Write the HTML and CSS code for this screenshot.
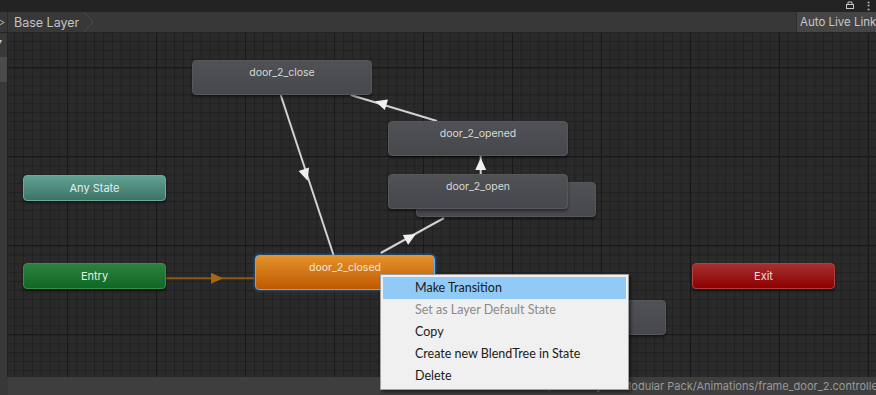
FILE: index.html
```html
<!DOCTYPE html>
<html>
    <head>
        <title>Animator</title>
        <link rel="stylesheet" href="styles.css">
    </head>
    <body>
        <div class="window">
            <div class="titlebar">
                <svg class="title-icon" width="10" height="10" viewBox="0 0 10 10">
                    <path d="M3 4 V2 H7 V4" fill="none" stroke="#c8c8c8" stroke-width="1"/>
                    <rect x="1.5" y="4.5" width="7" height="4" fill="none" stroke="#c8c8c8" stroke-width="1"/>
                </svg>
                <span class="kebab">&#8942;</span>
            </div>
            <div class="toolbar">
                <div class="toolbar-stub">&#9655;</div>
                <div class="crumb">
                    <span>Base Layer</span>
                    <svg class="crumb-arrow" width="12" height="20" viewBox="0 0 12 20">
                        <path d="M1 0 L10 10 L1 20" fill="none" stroke="#4c4c4c" stroke-width="1"/>
                    </svg>
                </div>
                <div class="toolbar-space"></div>
                <div class="live-link">Auto Live Link</div>
            </div>
            <div class="main">
                <aside class="side">
                    <div class="side-drop">&#9662;</div>
                    <div class="side-block"></div>
                </aside>
                <div class="graph">
                    <svg class="edges" width="868" height="344" viewBox="0 0 868 344">
                        <g stroke="#d2d2d2" stroke-width="2" fill="#ececec">
                            <line x1="273.7" y1="62" x2="326.5" y2="222"/>
                            <line x1="430" y1="88" x2="343.7" y2="62"/>
                            <line x1="473.7" y1="141" x2="473.7" y2="123"/>
                            <line x1="373.7" y1="220" x2="437" y2="185"/>
                        </g>
                        <g fill="#f0f0f0">
                            <polygon points="-6,-5.5 6,0 -6,5.5" transform="translate(298.7 142) rotate(71.7)"/>
                            <polygon points="-6,-5.5 6,0 -6,5.5" transform="translate(373.7 70) rotate(196.8)"/>
                            <polygon points="-6,-5.5 6,0 -6,5.5" transform="translate(473.7 131) rotate(-90)"/>
                            <polygon points="-6,-5.5 6,0 -6,5.5" transform="translate(403.7 204) rotate(-28.9)"/>
                        </g>
                        <line x1="158" y1="245.3" x2="247" y2="245.3" stroke="#8a5a12" stroke-width="2"/>
                        <polygon points="-6,-5.5 6,0 -6,5.5" transform="translate(210 245.3)" fill="#a8690e"/>
                    </svg>

                    <div class="node state" style="left:184px;top:27px">door_2_close</div>
                    <div class="node state" style="left:380px;top:88px">door_2_opened</div>
                    <div class="node state" style="left:408px;top:149px"></div>
                    <div class="node state" style="left:380px;top:141px">door_2_open</div>
                    <div class="node state" style="left:478px;top:267px"></div>
                    <div class="node state active" style="left:247px;top:222px">door_2_closed</div>
                    <div class="node small any" style="left:15px;top:142px">Any State</div>
                    <div class="node small entry" style="left:15px;top:230px">Entry</div>
                    <div class="node small exit" style="left:684px;top:230px">Exit</div>
                </div>
            </div>
            <div class="status">
                <span class="path">od:Assets/Sci-Fi Styled Modular Pack/Animations/frame_door_2.controller</span>
            </div>

            <ul class="context-menu">
                <li class="selected">Make Transition</li>
                <li class="disabled">Set as Layer Default State</li>
                <li>Copy</li>
                <li>Create new BlendTree in State</li>
                <li>Delete</li>
            </ul>
        </div>
    </body>
</html>
```

FILE: styles.css
```css
*, *::before, *::after {
    box-sizing: border-box;
}

body {
    margin: 0px;
    background-color: #282828;
    font-family: Inter, "Noto Sans", sans-serif;
}

.window {
    position: relative;
    display: flex;
    flex-direction: column;
    width: 876px;
    height: 395px;
    overflow: hidden;
}

.titlebar {
    display: flex;
    align-items: center;
    justify-content: flex-end;
    gap: 8px;
    height: 12px;
    padding-right: 2px;
    background-color: #232323;
    color: #c8c8c8;
}

.title-icon {
    margin-top: -2px;
}

.kebab {
    font-size: 11px;
    line-height: 12px;
    font-weight: bold;
}

.toolbar {
    display: flex;
    height: 21px;
    background-color: #383838;
    border-bottom: 1px solid #232323;
}

.toolbar-stub {
    width: 8px;
    overflow: hidden;
    color: #b0b0b0;
    font-size: 10px;
    line-height: 20px;
    text-indent: -4px;
    border-right: 1px solid #2a2a2a;
}

.crumb {
    display: flex;
    align-items: center;
    padding-left: 6px;
    color: #c4c4c4;
    font-size: 12.5px;
}

.crumb-arrow {
    margin-left: 4px;
}

.toolbar-space {
    flex: 1;
}

.live-link {
    width: 80px;
    padding-left: 3px;
    background-color: #454545;
    border-left: 1px solid #2c2c2c;
    color: #c8c8c8;
    font-size: 11.5px;
    line-height: 20px;
    white-space: nowrap;
    overflow: hidden;
}

.main {
    display: flex;
    flex: 1;
}

.side {
    width: 8px;
    background-color: #383838;
    border-right: 1px solid #232323;
}

.side-drop {
    color: #c0c0c0;
    font-size: 8px;
    line-height: 16px;
    text-indent: -2px;
}

.side-block {
    height: 25px;
    margin-top: 8px;
    background-color: #4b4b4b;
}

.graph {
    position: relative;
    flex: 1;
    background-color: #2a2a2a;
    background-image:
        linear-gradient(to right, #191919 1px, transparent 1px),
        linear-gradient(to bottom, #191919 1px, transparent 1px),
        linear-gradient(to right, #202020 1px, transparent 1px),
        linear-gradient(to bottom, #202020 1px, transparent 1px);
    background-size: 89px 89px, 89px 89px, 8.9px 8.9px, 8.9px 8.9px;
    background-position: 59px 34px, 59px 34px, 6px 8px, 6px 8px;
}

.edges {
    position: absolute;
    top: 0px;
    left: -1px;
}

.node {
    position: absolute;
    width: 180px;
    height: 35px;
    padding-top: 5px;
    border-radius: 4px;
    text-align: center;
    font-size: 10.5px;
    color: #d8d8d8;
    box-shadow: 0px 2px 3px rgba(0, 0, 0, 0.45);
}

.state {
    background: linear-gradient(#505155, #47484c);
    border: 1px solid #56575b;
}

.active {
    background: linear-gradient(#e3922c, #bf5900);
    border: 1px solid #5aaeff;
    box-shadow: 0px 0px 3px #2f86df;
    color: #f4e6d4;
}

.small {
    width: 143px;
    height: 26px;
    padding-top: 5px;
    font-size: 11px;
}

.any {
    background: linear-gradient(#5fa393, #3e7268);
    border: 1px solid #6aab9c;
    color: #e4efec;
}

.entry {
    background: linear-gradient(#2e8140, #0f6824);
    border: 1px solid #3a8c4a;
    color: #e3f0e5;
}

.exit {
    background: linear-gradient(#a53030, #8e0000);
    border: 1px solid #b04040;
    color: #f2dede;
}

.status {
    display: flex;
    justify-content: flex-end;
    height: 18px;
    padding-left: 530px;
    background-color: #3e3e3e;
    border-left: 8px solid #383838;
    overflow: hidden;
}

.path {
    flex-shrink: 0;
    margin-right: -6px;
    color: #9a9a9a;
    font-size: 11px;
    line-height: 18px;
    white-space: nowrap;
}

.context-menu {
    position: absolute;
    left: 380px;
    top: 274px;
    width: 249px;
    margin: 0px;
    padding: 2px 2px 2px 2px;
    list-style: none;
    background-color: #f0f0f0;
    border: 1px solid #a0a0a0;
    box-shadow: 2px 2px 3px rgba(0, 0, 0, 0.5);
    font-family: Lato, "Noto Sans", sans-serif;
    font-size: 12.5px;
    color: #1a1a1a;
}

.context-menu li {
    height: 22px;
    padding-left: 32px;
    line-height: 22px;
    white-space: nowrap;
}

.context-menu .selected {
    background-color: #91c9f7;
}

.context-menu .disabled {
    color: #8a8a8a;
}
```
